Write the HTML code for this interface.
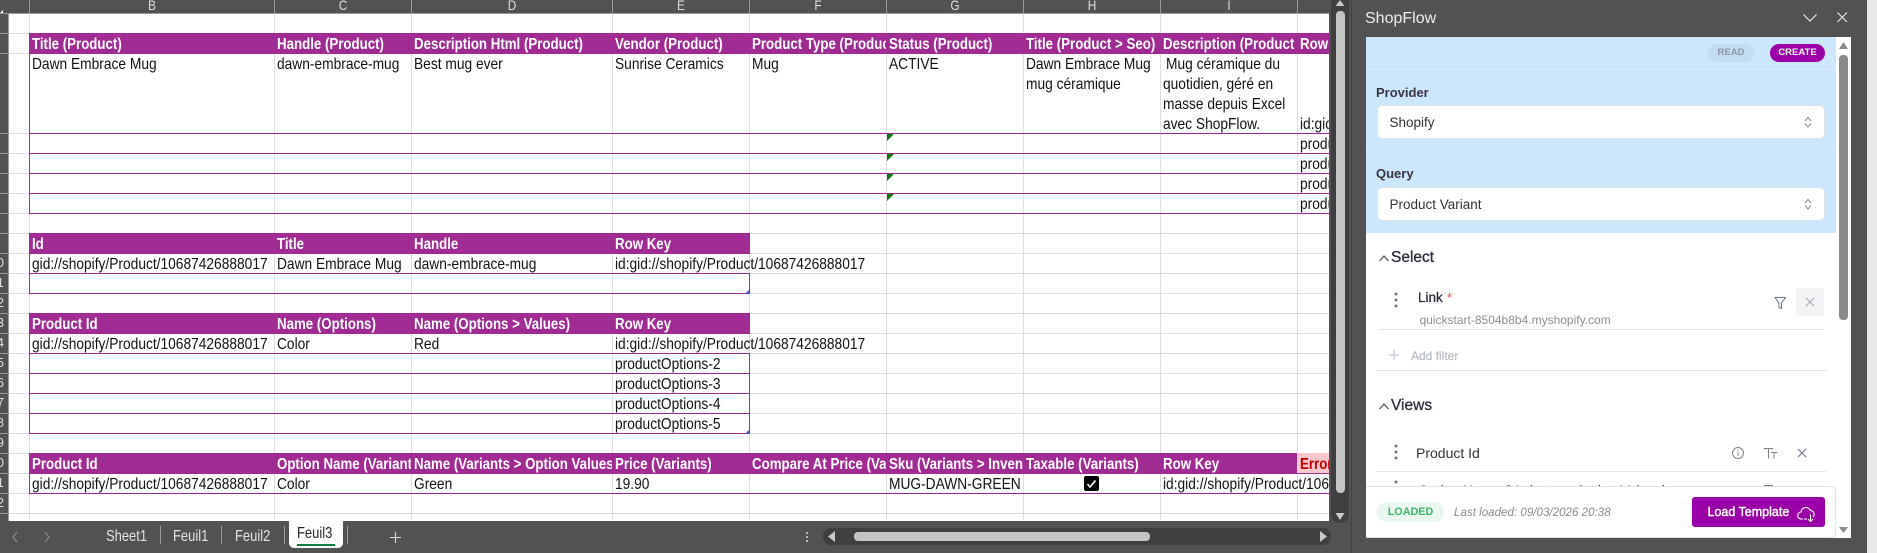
<!DOCTYPE html>
<html><head><meta charset="utf-8"><title>ShopFlow</title>
<style>
html,body{margin:0;padding:0;width:1877px;height:553px;overflow:hidden;background:#fff}
body{position:relative;font-family:"Liberation Sans",sans-serif}
.a{position:absolute}
svg{position:absolute;left:0;top:0}
#grid{left:0;top:14px;width:1329px;height:507px;position:absolute;background-image:linear-gradient(to top,#dedede 1px,transparent 1px);background-size:100% 20px}
.c{--s:.86;position:absolute;margin-top:1px;height:20px;line-height:20px;overflow:hidden;white-space:nowrap;padding-left:calc(3px/var(--s));box-sizing:border-box;font-size:16px;color:#111;width:calc(var(--w)/var(--s));transform:scaleX(var(--s));transform-origin:0 0}
.h{--s:.83;color:#fff;font-weight:700}
.o{overflow:visible}
.B{left:29px;--w:245px}.C{left:274px;--w:137px}.D{left:411px;--w:201px}.E{left:612px;--w:137px}.F{left:749px;--w:137px}.G{left:886px;--w:137px}.H{left:1023px;--w:137px}.I{left:1160px;--w:137px}.J{left:1297px;--w:32px}
.l{position:absolute;top:-3px;height:16px;line-height:16px;width:20px;text-align:center;color:#ddd;font-size:14px;transform:scaleX(.85)}
.n{position:absolute;left:-16px;width:20px;text-align:right;height:20px;line-height:20px;color:#ddd;font-size:13px}
.tab{position:absolute;top:527px;height:20px;line-height:20px;color:#e4e4e4;font-size:16px;white-space:nowrap;transform:scaleX(.81);transform-origin:0 0}
.p{position:absolute;white-space:nowrap;color:#2b2b3a}
.sel{position:absolute;left:1376.5px;width:448.5px;height:34px;background:#fff;border:1px solid #dbe3ec;border-radius:5px;box-sizing:border-box;line-height:33px;padding-left:12px;font-size:13.5px;color:#333}
</style></head><body>
<div id="grid"></div>
<svg width="1877" height="553" shape-rendering="crispEdges">
<rect x="8" y="54" width="1321" height="79" fill="#fff"/>
<g fill="#dedede">
<rect x="29" y="13" width="1" height="508"/><rect x="274" y="13" width="1" height="508"/><rect x="411" y="13" width="1" height="508"/><rect x="612" y="13" width="1" height="508"/><rect x="749" y="13" width="1" height="508"/><rect x="886" y="13" width="1" height="508"/><rect x="1023" y="13" width="1" height="508"/><rect x="1160" y="13" width="1" height="508"/><rect x="1297" y="13" width="1" height="508"/>
</g>
<g fill="#a02b93">
<rect x="29" y="33" width="1300" height="21"/>
<rect x="29" y="233" width="721" height="21"/>
<rect x="29" y="313" width="721" height="21"/>
<rect x="29" y="453" width="1300" height="21"/>
<rect x="29" y="54" width="1" height="160"/>
<rect x="29" y="133" width="1300" height="1"/><rect x="29" y="153" width="1300" height="1"/><rect x="29" y="173" width="1300" height="1"/><rect x="29" y="193" width="1300" height="1"/><rect x="29" y="213" width="1300" height="1"/>
<rect x="29" y="254" width="1" height="40"/><rect x="29" y="273" width="721" height="1"/><rect x="29" y="293" width="721" height="1"/><rect x="749" y="273" width="1" height="21"/>
<rect x="29" y="334" width="1" height="100"/><rect x="29" y="353" width="721" height="1"/><rect x="29" y="373" width="721" height="1"/><rect x="29" y="393" width="721" height="1"/><rect x="29" y="413" width="721" height="1"/><rect x="29" y="433" width="721" height="1"/><rect x="749" y="353" width="1" height="81"/>
<rect x="29" y="474" width="1" height="20"/><rect x="29" y="493" width="1300" height="1"/>
</g>
<rect x="1297" y="453" width="32" height="20" fill="#ffc7ce"/>
<g fill="#0b7a0b" shape-rendering="auto">
<polygon points="887,134 894,134 887,141"/><polygon points="887,154 894,154 887,161"/><polygon points="887,174 894,174 887,181"/><polygon points="887,194 894,194 887,201"/>
</g>
<g fill="#4a4ab8" shape-rendering="auto">
<polygon points="750,289 750,294 745,294"/><polygon points="750,429 750,434 745,434"/>
</g>
<rect x="1084" y="476" width="15" height="15" rx="2" fill="#000"/>
<path d="M1087.5 484l2.5 3 5.5-6.5" stroke="#fff" stroke-width="1.6" fill="none" shape-rendering="auto"/>
</svg>

<div class="c h B" style="top:34px">Title (Product)</div>
<div class="c h C" style="top:34px">Handle (Product)</div>
<div class="c h D" style="top:34px">Description Html (Product)</div>
<div class="c h E" style="top:34px">Vendor (Product)</div>
<div class="c h F" style="top:34px">Product Type (Product)</div>
<div class="c h G" style="top:34px">Status (Product)</div>
<div class="c h H" style="top:34px">Title (Product &gt; Seo)</div>
<div class="c h I" style="top:34px">Description (Product &gt; Seo)</div>
<div class="c h J" style="top:34px">Row Key</div>

<div class="c B" style="top:54px">Dawn Embrace Mug</div>
<div class="c C" style="top:54px">dawn-embrace-mug</div>
<div class="c D" style="top:54px">Best mug ever</div>
<div class="c E" style="top:54px">Sunrise Ceramics</div>
<div class="c F" style="top:54px">Mug</div>
<div class="c G" style="top:54px">ACTIVE</div>
<div class="c H" style="top:54px">Dawn Embrace Mug</div>
<div class="c H" style="top:74px">mug céramique</div>
<div class="c I" style="top:54px;padding-left:7px">Mug céramique du</div>
<div class="c I" style="top:74px">quotidien, géré en</div>
<div class="c I" style="top:94px">masse depuis Excel</div>
<div class="c I" style="top:114px">avec ShopFlow.</div>
<div class="c J" style="top:114px">id:gid://shopify</div>
<div class="c J" style="top:134px">productOptions-2</div>
<div class="c J" style="top:154px">productOptions-3</div>
<div class="c J" style="top:174px">productOptions-4</div>
<div class="c J" style="top:194px">productOptions-5</div>

<div class="c h B" style="top:234px">Id</div>
<div class="c h C" style="top:234px">Title</div>
<div class="c h D" style="top:234px">Handle</div>
<div class="c h E" style="top:234px">Row Key</div>
<div class="c B" style="top:254px">gid://shopify/Product/10687426888017</div>
<div class="c C" style="top:254px">Dawn Embrace Mug</div>
<div class="c D" style="top:254px">dawn-embrace-mug</div>
<div class="c E o" style="top:254px">id:gid://shopify/Product/10687426888017</div>

<div class="c h B" style="top:314px">Product Id</div>
<div class="c h C" style="top:314px">Name (Options)</div>
<div class="c h D" style="top:314px">Name (Options &gt; Values)</div>
<div class="c h E" style="top:314px">Row Key</div>
<div class="c B" style="top:334px">gid://shopify/Product/10687426888017</div>
<div class="c C" style="top:334px">Color</div>
<div class="c D" style="top:334px">Red</div>
<div class="c E o" style="top:334px">id:gid://shopify/Product/10687426888017</div>
<div class="c E" style="top:354px">productOptions-2</div>
<div class="c E" style="top:374px">productOptions-3</div>
<div class="c E" style="top:394px">productOptions-4</div>
<div class="c E" style="top:414px">productOptions-5</div>

<div class="c h B" style="top:454px">Product Id</div>
<div class="c h C" style="top:454px">Option Name (Variants)</div>
<div class="c h D" style="top:454px">Name (Variants &gt; Option Values)</div>
<div class="c h E" style="top:454px">Price (Variants)</div>
<div class="c h F" style="top:454px">Compare At Price (Variants)</div>
<div class="c h G" style="top:454px">Sku (Variants &gt; Inventory)</div>
<div class="c h H" style="top:454px">Taxable (Variants)</div>
<div class="c h I" style="top:454px">Row Key</div>
<div class="c h J" style="top:454px;color:#c00000">Errors</div>
<div class="c B" style="top:474px">gid://shopify/Product/10687426888017</div>
<div class="c C" style="top:474px">Color</div>
<div class="c D" style="top:474px">Green</div>
<div class="c E" style="top:474px">19.90</div>
<div class="c G" style="top:474px">MUG-DAWN-GREEN</div>
<div class="c I" style="top:474px;--w:169px">id:gid://shopify/Product/10687426888017</div>

<!-- column header strip -->
<div class="a" style="left:0;top:0;width:1329px;height:13px;background:#525252;overflow:hidden">
<div class="l" style="left:142px">B</div><div class="l" style="left:333px">C</div><div class="l" style="left:502px">D</div><div class="l" style="left:671px">E</div><div class="l" style="left:808px">F</div><div class="l" style="left:945px">G</div><div class="l" style="left:1082px">H</div><div class="l" style="left:1219px">I</div>
</div>
<!-- row header strip -->
<div class="a" style="left:0;top:13px;width:8px;height:508px;background:#525252;overflow:hidden">
<div class="n" style="top:240px">0</div><div class="n" style="top:260px">1</div><div class="n" style="top:280px">2</div><div class="n" style="top:300px">3</div><div class="n" style="top:320px">4</div><div class="n" style="top:340px">5</div><div class="n" style="top:360px">6</div><div class="n" style="top:380px">7</div><div class="n" style="top:400px">8</div><div class="n" style="top:420px">9</div><div class="n" style="top:440px">0</div><div class="n" style="top:460px">1</div><div class="n" style="top:480px">2</div>
</div>
<svg width="1877" height="553" shape-rendering="crispEdges">
<g fill="#9a9a9a">
<rect x="0" y="13" width="1329" height="1"/>
<rect x="29" y="0" width="1" height="13"/><rect x="274" y="0" width="1" height="13"/><rect x="411" y="0" width="1" height="13"/><rect x="612" y="0" width="1" height="13"/><rect x="749" y="0" width="1" height="13"/><rect x="886" y="0" width="1" height="13"/><rect x="1023" y="0" width="1" height="13"/><rect x="1160" y="0" width="1" height="13"/><rect x="1297" y="0" width="1" height="13"/>
<rect x="8" y="13" width="1" height="508"/>
<rect x="0" y="33" width="8" height="1"/><rect x="0" y="53" width="8" height="1"/><rect x="0" y="133" width="8" height="1"/><rect x="0" y="153" width="8" height="1"/><rect x="0" y="173" width="8" height="1"/><rect x="0" y="193" width="8" height="1"/><rect x="0" y="213" width="8" height="1"/><rect x="0" y="233" width="8" height="1"/><rect x="0" y="253" width="8" height="1"/><rect x="0" y="273" width="8" height="1"/><rect x="0" y="293" width="8" height="1"/><rect x="0" y="313" width="8" height="1"/><rect x="0" y="333" width="8" height="1"/><rect x="0" y="353" width="8" height="1"/><rect x="0" y="373" width="8" height="1"/><rect x="0" y="393" width="8" height="1"/><rect x="0" y="413" width="8" height="1"/><rect x="0" y="433" width="8" height="1"/><rect x="0" y="453" width="8" height="1"/><rect x="0" y="473" width="8" height="1"/><rect x="0" y="493" width="8" height="1"/><rect x="0" y="513" width="8" height="1"/>
</g>
<polygon points="0,13 3,10 3,13" fill="#fff" shape-rendering="auto"/>
</svg>

<!-- bottom bar -->
<div class="a" style="left:0;top:521px;width:1351px;height:32px;background:#525252"></div>
<!-- right of grid -->
<div class="a" style="left:1329px;top:0;width:548px;height:553px;background:#525252"></div>
<div class="a" style="left:1867px;top:0;width:10px;height:553px;background:#e8e8e8"></div>
<div class="a" style="left:1351px;top:0;width:1px;height:553px;background:#444"></div>

<div class="a" style="left:289px;top:521px;width:54px;height:27px;background:#fff;border-radius:0 0 5px 5px"></div>
<div class="a" style="left:297px;top:544px;width:38px;height:2px;background:#107c41"></div>
<div class="tab" style="left:106px">Sheet1</div>
<div class="tab" style="left:173px">Feuil1</div>
<div class="tab" style="left:235px">Feuil2</div>
<div class="tab" style="left:297px;top:524px;color:#222">Feuil3</div>

<!-- scrollbars -->
<div class="a" style="left:823px;top:528px;width:508px;height:17px;background:#3f3f3f;border-radius:8px"></div>
<div class="a" style="left:854px;top:532px;width:296px;height:9px;background:#c4c4c4;border-radius:4px"></div>
<div class="a" style="left:1331px;top:-8px;width:18px;height:531px;background:#3f3f3f;border-radius:9px"></div>
<div class="a" style="left:1335.5px;top:11px;width:9.5px;height:482px;background:#c4c4c4;border-radius:4px"></div>

<svg width="1877" height="553">
<!-- tab bar icons -->
<path d="M17 532l-4 5 4 5M45 532l4 5-4 5" stroke="#8c8c8c" stroke-width="1.1" fill="none"/>
<path d="M395.5 532v11M390 537.5h11" stroke="#dcdcdc" stroke-width="1.1" fill="none"/>
<g fill="#9a9a9a" shape-rendering="crispEdges"><rect x="160" y="526" width="1" height="18"/><rect x="221" y="526" width="1" height="18"/><rect x="284" y="526" width="1" height="18"/><rect x="347" y="526" width="1" height="18"/></g>
<g fill="#d8d8d8"><circle cx="807" cy="533" r="1"/><circle cx="807" cy="537" r="1"/><circle cx="807" cy="541" r="1"/></g>
<polygon points="828,536.5 835,531 835,542" fill="#c8c8c8"/>
<polygon points="1327,536.5 1320,531 1320,542" fill="#c8c8c8"/>
<polygon points="1335.5,513 1344.5,513 1340,520" fill="#c8c8c8"/>
<polygon points="1340,0 1344.5,6 1335.5,6" fill="#c8c8c8"/>
</svg>

<!-- pane -->
<div class="p" style="left:1365px;top:10px;font-size:16px;line-height:18px;color:#eee">ShopFlow</div>
<div class="a" style="left:1366px;top:37px;width:485px;height:501px;background:#fff;overflow:hidden"></div>
<div class="a" style="left:1366px;top:37px;width:470px;height:196px;background:#cce6fc"></div>
<div class="a" style="left:1366px;top:69px;width:470px;height:1px;background:#e2eefa"></div>
<div class="a" style="left:1366px;top:150px;width:470px;height:1px;background:#dbe9f6"></div>

<div class="a" style="left:1708px;top:44px;width:46px;height:18px;border-radius:9px;background:#c3dcf0;color:#8b97a5;font-size:9.5px;font-weight:700;text-align:center;line-height:18px">READ</div>
<div class="a" style="left:1770px;top:44px;width:55px;height:18px;border-radius:9px;background:#9b00a8;color:#fff;font-size:9.5px;font-weight:700;text-align:center;line-height:18px">CREATE</div>

<div class="p" style="left:1376px;top:85px;font-size:13px;line-height:16px;font-weight:700;color:#3a3340">Provider</div>
<div class="sel" style="top:105px">Shopify</div>
<div class="p" style="left:1376px;top:166px;font-size:13px;line-height:16px;font-weight:700;color:#3a3340">Query</div>
<div class="sel" style="top:187px">Product Variant</div>

<div class="p" style="left:1391px;top:249px;font-size:15.5px;line-height:18px;-webkit-text-stroke:.3px #2b2b3a">Select</div>
<div class="p" style="left:1418px;top:290px;font-size:13.5px;line-height:16px;-webkit-text-stroke:.25px #2b2b3a">Link</div>
<div class="p" style="left:1447px;top:290px;font-size:13px;line-height:16px;color:#ef4444">*</div>
<div class="p" style="left:1419.5px;top:313px;font-size:12px;line-height:14px;color:#8a9099">quickstart-8504b8b4.myshopify.com</div>
<div class="a" style="left:1378px;top:329px;width:446px;height:1px;background:#e2e4e8"></div>
<div class="a" style="left:1796px;top:288px;width:28px;height:28px;background:#f1f3f5;border-radius:3px"></div>
<div class="p" style="left:1411px;top:349px;font-size:12px;line-height:14px;color:#b5bac2;-webkit-text-stroke:.2px #b5bac2">Add filter</div>
<div class="a" style="left:1376px;top:370px;width:450px;height:1px;background:#e2e4ea"></div>
<div class="p" style="left:1391px;top:397px;font-size:15.5px;line-height:18px;-webkit-text-stroke:.3px #2b2b3a">Views</div>
<div class="p" style="left:1416px;top:445px;font-size:14px;line-height:16px;color:#333">Product Id</div>
<div class="a" style="left:1376px;top:471px;width:450px;height:1px;background:#e2e4ea"></div>
<div class="p" style="left:1418px;top:481.5px;font-size:14px;line-height:16px;color:#333">Option Name (Variants &gt; Option Values)</div>

<svg width="1877" height="553">
<!-- title bar -->
<path d="M1803.5 14.5l6.5 6.5 6.5-6.5" stroke="#e6e6e6" stroke-width="1.2" fill="none"/>
<path d="M1837.5 12.5l9.5 9.5M1847 12.5l-9.5 9.5" stroke="#e6e6e6" stroke-width="1.2" fill="none"/>
<!-- pane scrollbar -->
<rect x="1839" y="55" width="9" height="265" rx="4" fill="#8a8a8a"/>
<polygon points="1843.5,42 1848,49 1839,49" fill="#8a8a8a"/>
<polygon points="1839,527 1848,527 1843.5,533" fill="#8a8a8a"/>
<!-- select arrows -->
<path d="M1805 121l3-3.5 3 3.5M1805 123.5l3 3.5 3-3.5" stroke="#777" stroke-width=".9" fill="none"/>
<path d="M1805 203l3-3.5 3 3.5M1805 205.5l3 3.5 3-3.5" stroke="#777" stroke-width=".9" fill="none"/>
<!-- section chevrons -->
<path d="M1379.5 261l4.5-5 4.5 5" stroke="#444" stroke-width="1.1" fill="none"/>
<path d="M1379.5 409l4.5-5 4.5 5" stroke="#444" stroke-width="1.1" fill="none"/>
<!-- drag dots -->
<g fill="#6b7280"><circle cx="1396" cy="294" r="1.5"/><circle cx="1396" cy="300" r="1.5"/><circle cx="1396" cy="306" r="1.5"/>
<circle cx="1396" cy="446" r="1.5"/><circle cx="1396" cy="452" r="1.5"/><circle cx="1396" cy="458" r="1.5"/><circle cx="1396" cy="482" r="1.5"/></g>
<!-- filter -->
<path d="M1775 297.5h10.5l-4 5.500v5.500l-2.500-1v-4.500z" stroke="#6b7280" stroke-width="1" fill="none" stroke-linejoin="round"/>
<path d="M1806 298l8 8M1814 298l-8 8" stroke="#a3a9b2" stroke-width="1.1" fill="none"/>
<path d="M1394 350v10M1389 355h10" stroke="#c2c6cc" stroke-width="1.2" fill="none"/>
<!-- view row icons -->
<circle cx="1738" cy="453" r="5.5" stroke="#7b8088" stroke-width="1" fill="none"/>
<path d="M1738 452.5v3.5M1738 450v1" stroke="#7b8088" stroke-width="1" fill="none"/>
<path d="M1764.5 449.5v-1h8v1M1768.5 448.5v10M1771 452.5h6M1774 452.5v6" stroke="#7b8088" stroke-width="1" fill="none"/>
<path d="M1798 449l8 8M1806 449l-8 8" stroke="#6b7280" stroke-width="1.1" fill="none"/>
<path d="M1764 485.500h9" stroke="#7b8088" stroke-width="1" fill="none"/>
</svg>

<!-- footer -->
<div class="a" style="left:1366px;top:486px;width:470px;height:52px;background:#fff;border:1px solid #e3e3e6;border-left:0;border-radius:0 5px 5px 0;box-sizing:border-box"></div>
<div class="a" style="left:1377px;top:502px;width:67px;height:20px;border-radius:10px;background:#e9f7ee;color:#3fb56e;font-size:10.8px;font-weight:700;text-align:center;line-height:20px">LOADED</div>
<div class="p" style="left:1454px;top:505px;font-size:11.6px;line-height:15px;font-style:italic;color:#8a8a8a">Last loaded: 09/03/2026 20:38</div>
<div class="a" style="left:1692px;top:497px;width:133px;height:30px;border-radius:3px;background:#9b00a8"></div>
<div class="p" style="left:1707.5px;top:504px;font-size:12.5px;line-height:16px;color:#fff;-webkit-text-stroke:.4px #fff">Load Template</div>
<svg width="1877" height="553">
<path d="M1803 519h-1.5a3.5 3.5 0 0 1-.5-7 5 5 0 0 1 9.5-1.5a3.800 3.800 0 0 1 2.500 6.500" stroke="#fff" stroke-width="1.1" fill="none"/>
<path d="M1804 519h3M1810.5 514.5v7M1808 519l2.5 2.5 2.5-2.5" stroke="#fff" stroke-width="1.1" fill="none"/>
</svg>
</body></html>
